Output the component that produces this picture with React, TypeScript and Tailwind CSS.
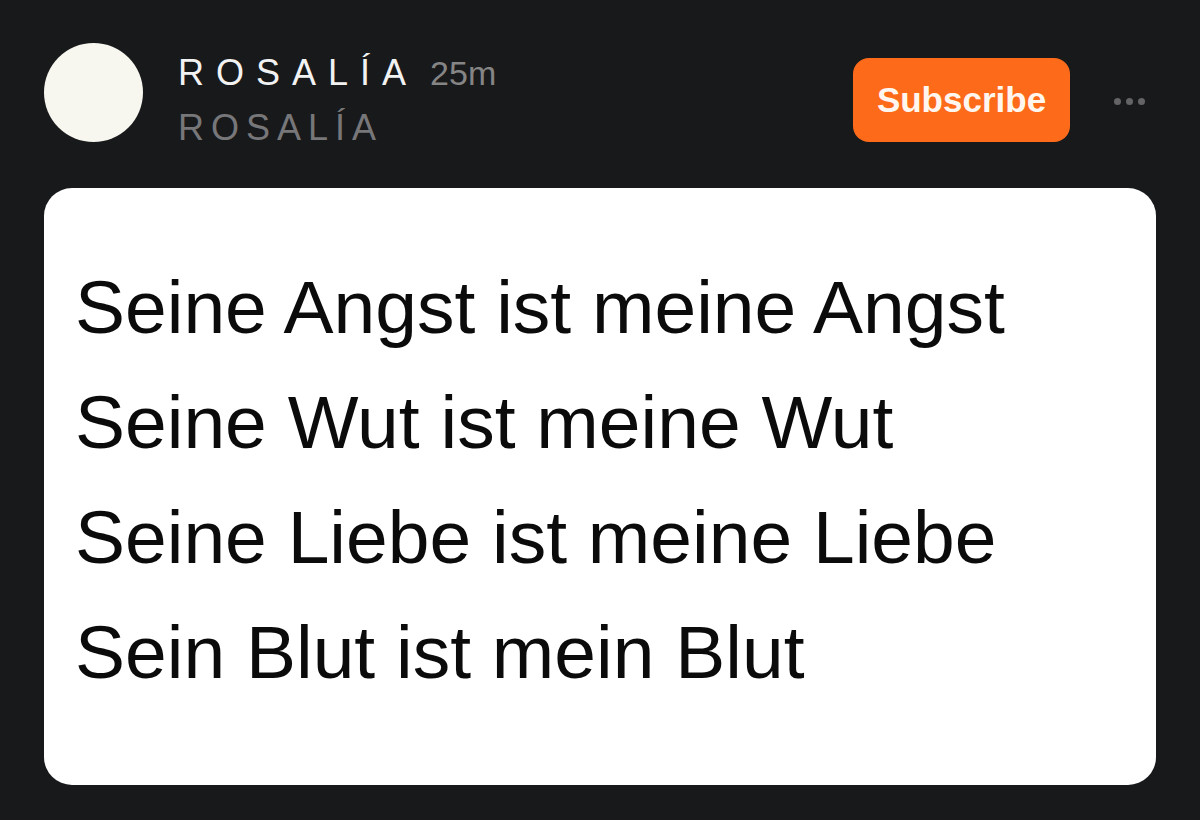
export default function App() {
  const lines = [
    "Seine Angst ist meine Angst",
    "Seine Wut ist meine Wut",
    "Seine Liebe ist meine Liebe",
    "Sein Blut ist mein Blut",
  ];

  return (
    <div
      className="min-h-[820px] w-full bg-[#18191b] px-[44px] pt-[43px]"
      style={{ fontFamily: '"Liberation Sans", Arial, sans-serif' }}
    >
      <div className="flex items-start pr-[11px]">
        <div className="w-[99px] h-[99px] shrink-0 rounded-full bg-[#f7f6ef]" />
        <div className="ml-[35px] mt-[10px] flex-1">
          <div className="h-[40px] leading-[40px] whitespace-nowrap">
            <span className="text-[36px] tracking-[12px] text-[#f2f2f2]">ROSALÍA</span>
            <span className="text-[34px] text-[#858585] ml-[12px]">25m</span>
          </div>
          <div className="mt-[15px] h-[40px] leading-[40px] text-[36px] tracking-[7px] text-[#77777a] whitespace-nowrap">
            ROSALÍA
          </div>
        </div>
        <button className="mt-[15px] h-[84px] w-[217px] rounded-[16px] bg-[#fd6b1a] text-[35px] font-bold text-[#fff7ef]">
          Subscribe
        </button>
        <div className="ml-[44px] mt-[55px] flex gap-[5px]">
          <span className="w-[7px] h-[7px] rounded-full bg-[#646466]" />
          <span className="w-[7px] h-[7px] rounded-full bg-[#646466]" />
          <span className="w-[7px] h-[7px] rounded-full bg-[#646466]" />
        </div>
      </div>

      <div className="mt-[40px] h-[597px] rounded-[28px] bg-white pl-[31px] pt-[62px]">
        {lines.map((line, i) => (
          <div key={i} className="text-[75px] leading-[115px] text-[#0b0b0b] whitespace-nowrap">
            {line}
          </div>
        ))}
      </div>
    </div>
  );
}
